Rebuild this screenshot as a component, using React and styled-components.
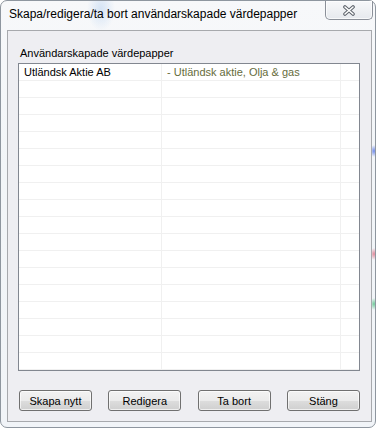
import React from "react";
import styled, { createGlobalStyle } from "styled-components";

const GlobalStyle = createGlobalStyle`
  html, body { margin: 0; padding: 0; background: #ffffff; }
  body { overflow: hidden; font-family: "Liberation Sans", Arial, sans-serif; }
`;

const Desktop = styled.div`
  width: 378px;
  height: 431px;
  background: #ffffff;
`;

const Window = styled.div`
  box-sizing: border-box;
  width: 376px;
  height: 428px;
  border: 1px solid #8e969f;
  border-radius: 7px;
  display: flex;
  flex-direction: column;
  background:
    radial-gradient(ellipse 4px 6px at 373px 150px, rgba(90, 120, 230, 0.85), rgba(90, 120, 230, 0) 100%),
    radial-gradient(ellipse 4px 6px at 373px 253px, rgba(220, 110, 130, 0.8), rgba(220, 110, 130, 0) 100%),
    radial-gradient(ellipse 4px 6px at 373px 303px, rgba(80, 190, 130, 0.8), rgba(80, 190, 130, 0) 100%),
    radial-gradient(ellipse 14px 22px at 100px 8px, rgba(150, 190, 235, 0.35), rgba(150, 190, 235, 0) 100%),
    linear-gradient(180deg, #f7f8fa 0%, #f2f5f8 40%, #f1f4f8 100%);
`;

const TitleBar = styled.div`
  height: 29px;
  flex: none;
  display: flex;
  align-items: flex-start;
  padding: 0 2px 0 8px;
`;

const Title = styled.div`
  flex: 1;
  padding-top: 6px;
  font-size: 12px;
  line-height: 15px;
  color: #000000;
  white-space: nowrap;
`;

const CloseButton = styled.div`
  box-sizing: border-box;
  width: 48px;
  height: 19px;
  border: 1px solid #8b9099;
  border-top: none;
  border-radius: 0 0 5px 5px;
  background: linear-gradient(180deg, #f7f8fa 0%, #eef0f3 55%, #e6e9ee 100%);
  box-shadow: inset 0 0 0 1px rgba(255, 255, 255, 0.7);
  display: flex;
  align-items: center;
  justify-content: center;
  padding-top: 1px;
`;

const Client = styled.div`
  flex: 1;
  margin: 0 3px 5px 6px;
  border: 1px solid #a7a9ad;
  background: #eeeef2;
  display: flex;
  flex-direction: column;
`;

const GroupLabel = styled.div`
  margin: 16px 0 0 12px;
  font-size: 11px;
  line-height: 13px;
  color: #000000;
  height: 16px;
`;

const ListBox = styled.div`
  box-sizing: border-box;
  margin-left: 10px;
  width: 342px;
  height: 308px;
  border: 1px solid #828790;
  background: #ffffff;
  overflow: hidden;
`;

const Row = styled.div`
  display: grid;
  grid-template-columns: 143px 179px 1fr;
  height: 17px;
  box-sizing: border-box;
  border-bottom: 1px solid #f0f0f0;
`;

const Cell = styled.div`
  box-sizing: border-box;
  border-right: ${(p) => (p.$last ? "none" : "1px solid #f0f0f0")};
  padding: 1px 0 0 5px;
  font-size: 11px;
  line-height: 15px;
  white-space: nowrap;
  overflow: hidden;
  color: ${(p) => (p.$muted ? "#666c3c" : "#000000")};
`;

const ButtonRow = styled.div`
  display: flex;
  justify-content: space-between;
  margin: 19px 11px 0 11px;
`;

const Button = styled.div`
  box-sizing: border-box;
  width: 73px;
  height: 21px;
  border: 1px solid #707070;
  border-radius: 3px;
  background: linear-gradient(180deg, #f2f2f2 0%, #ebebeb 50%, #dddddd 51%, #cfcfcf 100%);
  box-shadow: inset 0 0 0 1px rgba(255, 255, 255, 0.65);
  display: flex;
  align-items: center;
  justify-content: center;
  font-size: 11px;
  color: #000000;
`;

const CloseGlyph = () => (
  <svg width="14" height="11" viewBox="0 0 14 11">
    <path d="M3 2 L11 9 M11 2 L3 9" stroke="#5d636b" strokeWidth="3.6" strokeLinecap="round" fill="none" />
    <path d="M3 2 L11 9 M11 2 L3 9" stroke="#ffffff" strokeWidth="1.6" strokeLinecap="round" fill="none" />
  </svg>
);

const rows = [
  ["Utländsk Aktie AB", "- Utländsk aktie, Olja & gas"],
  ...Array.from({ length: 17 }, () => ["", ""]),
];

export default function App() {
  return (
    <Desktop>
      <GlobalStyle />
      <Window>
        <TitleBar>
          <Title>Skapa/redigera/ta bort användarskapade värdepapper</Title>
          <CloseButton>
            <CloseGlyph />
          </CloseButton>
        </TitleBar>
        <Client>
          <GroupLabel>Användarskapade värdepapper</GroupLabel>
          <ListBox>
            {rows.map((r, i) => (
              <Row key={i}>
                <Cell>{r[0]}</Cell>
                <Cell $muted>{r[1]}</Cell>
                <Cell $last />
              </Row>
            ))}
          </ListBox>
          <ButtonRow>
            <Button>Skapa nytt</Button>
            <Button>Redigera</Button>
            <Button>Ta bort</Button>
            <Button>Stäng</Button>
          </ButtonRow>
        </Client>
      </Window>
    </Desktop>
  );
}
